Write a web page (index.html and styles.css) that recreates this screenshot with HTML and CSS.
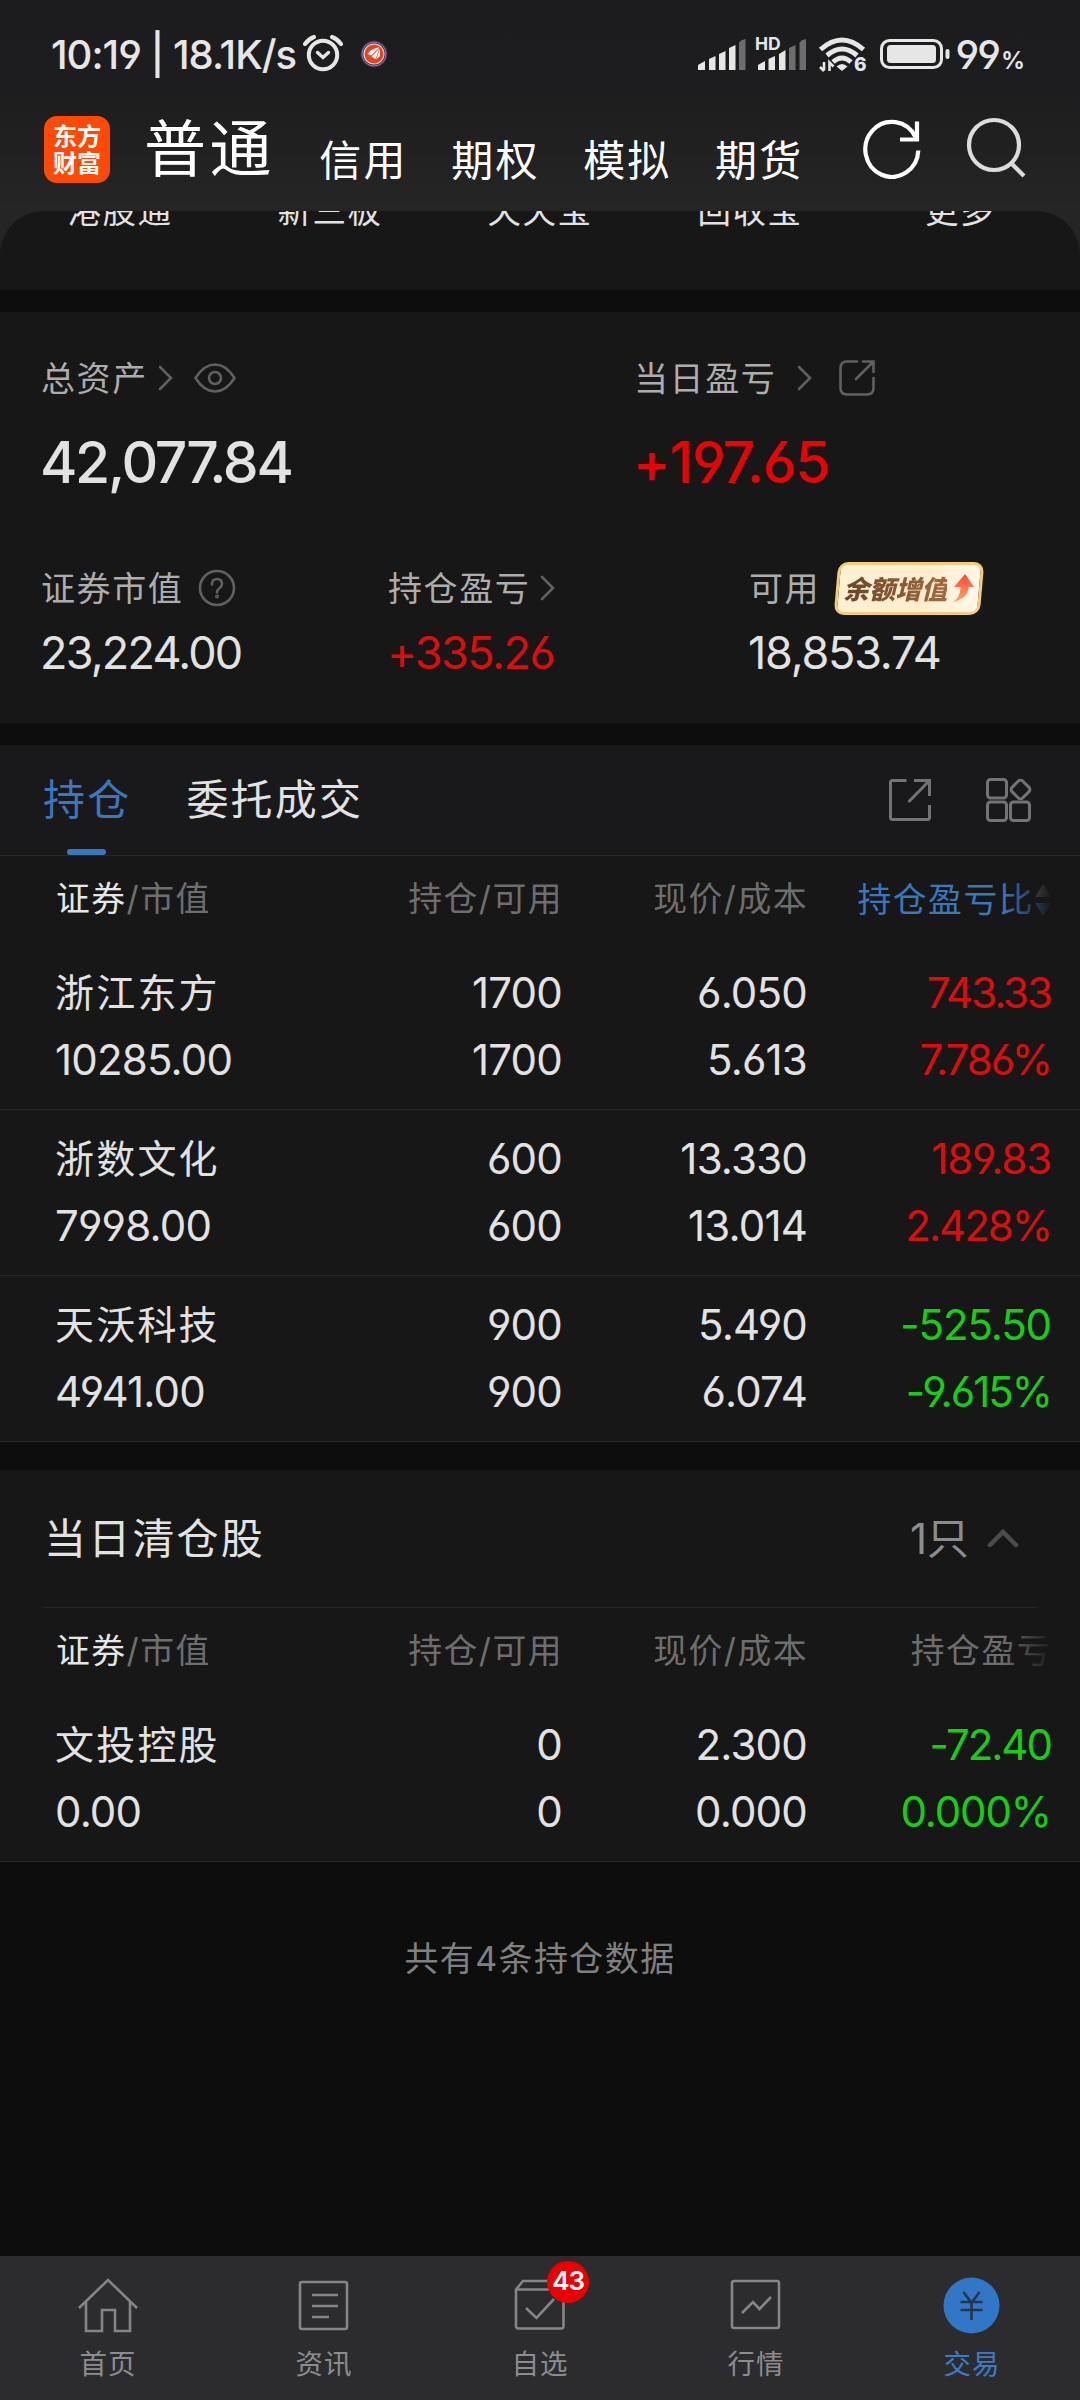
FILE: index.html
```
<!DOCTYPE html>
<html lang="zh-CN">
<head>
<meta charset="utf-8">
<title>交易</title>
<link rel="stylesheet" href="styles.css">
</head>
<body>
<div class="app">
  <header class="top">
    <div class="status">
      <span class="status-time">10:19 | 18.1K/s</span>
      <svg class="alarm" width="40" height="38" viewBox="0 0 40 38" fill="none" stroke="#e6e6e6" stroke-width="4">
        <circle cx="20" cy="20" r="14.2"/><path d="M14.5 17.5l5.5 5 5.5-5" stroke-width="3.4" stroke-linecap="round"/><path d="M2 9q3.500-5 9-7M38 9q-3.500-5-9-7" stroke-linecap="round"/>
      </svg>
      <svg class="notice" width="30" height="32" viewBox="0 0 30 32">
        <circle cx="15" cy="16" r="13.500" fill="#3d3159"/><circle cx="15" cy="16" r="12" fill="none" stroke="#8a80a8" stroke-width="1"/><circle cx="15" cy="16" r="10" fill="#e8431d" stroke="#f6d5cc" stroke-width="1.200"/><path d="M8.500 16q4-6 12-6.500L12 17.500zM12.500 18.500l8-8-4 10.500zM17 21.500l4-10.500v7z" fill="#fff"/>
      </svg>
      <div class="status-right">
        <svg width="172" height="38" viewBox="698 35 172 38" fill="#e6e6e6">
          <path d="M699 70v-5l7-4v9zM710 70V59l6.500-3v14zM720 70V54l6.500-3v19zM730 70V48l6.500-3v25z"/>
          <path fill="#6d6d6e" d="M740 70V43q1-3 6.500-4v31zM790 70V48l6.500-3v25zM800.500 70V43q1-3 6.500-4v31z"/>
          <path d="M759 70v-5l7-4v9zM769.500 70V59l6.500-3v14zM780 70V54l6.500-4v20z"/>
          <text x="756" y="50" class="hd">HD</text>
          <g fill="none" stroke="#e6e6e6" stroke-width="5"><path d="M821.500 49.500q21.500-19 43 0"/><path d="M828 55.500q15-13 30 0"/><path d="M834 62q9-8 18 0"/></g>
          <path d="M837.500 66.500q5.500-5 11 0l-5.500 4.500z"/>
          <path d="M825 62v8.500M821 67l4 4M830.500 71v-8.500l4 4" fill="none" stroke="#e6e6e6" stroke-width="2.600"/>
          <text x="855" y="71" class="six">6</text>
        </svg>
        <svg class="battery" width="70" height="32" viewBox="0 0 70 32"><rect x="1.500" y="2.500" width="60" height="27" rx="8" fill="none" stroke="#e6e6e6" stroke-width="3"/><rect x="7" y="7" width="49" height="18" rx="3.500" fill="#e6e6e6"/><rect x="65.500" y="11" width="4" height="10" rx="2" fill="#e6e6e6"/></svg>
        <span class="pct">99<small>%</small></span>
      </div>
    </div>
    <nav class="accounts">
      <div class="logo"><span>东方</span><span>财富</span></div>
      <span class="acct active">普通</span>
      <span class="acct">信用</span><span class="acct">期权</span><span class="acct">模拟</span><span class="acct">期货</span>
      <svg class="refresh" width="60" height="62" viewBox="0 0 60 62" fill="none" stroke="#fff" stroke-width="4.200"><path d="M56.300 33.500A26.500 27.500 0 1 1 53.500 20"/><path d="M55 4.500v18H38"/></svg>
      <svg class="search" width="60" height="62" viewBox="0 0 60 62" fill="none" stroke="#dcdcdc" stroke-width="4.200"><circle cx="28" cy="28" r="25"/><path d="M45.500 46.500L58 59"/></svg>
    </nav>
  </header>

  <section class="links-wrap"><div class="links"><span>港股通</span><span>新三板</span><span>天天宝</span><span>回收宝</span><span>更多</span></div></section>

  <section class="summary">
    <div class="sum-main">
      <div>
        <div class="label"><span>总资产</span>
          <svg class="chev" width="16" height="26" viewBox="0 0 16 26"><path d="M2 2l11 11L2 24"/></svg>
          <svg class="eye" width="42" height="32" viewBox="0 0 42 32"><path d="M1.500 16Q10 2.500 21 2.500T40.500 16Q32 29.500 21 29.500T1.500 16z"/><circle cx="21" cy="16" r="6"/></svg>
        </div>
        <div class="big">42,077.84</div>
      </div>
      <div>
        <div class="label"><span>当日盈亏</span>
          <svg class="chev far" width="16" height="26" viewBox="0 0 16 26"><path d="M2 2l11 11L2 24"/></svg>
          <svg class="share-sm" width="38" height="38" viewBox="0 0 38 38"><path d="M19 2.500H9Q2.500 2.500 2.500 9v20q0 6.500 6.500 6.500h20q6.500 0 6.500-6.500V19M25 2.500h10.500V13M35 3L18 20"/></svg>
        </div>
        <div class="big up day">+197.65</div>
      </div>
    </div>
    <div class="sum-sub">
      <div>
        <div class="label"><span>证券市值</span>
          <svg class="help" width="38" height="38" viewBox="0 0 38 38"><circle cx="19" cy="19" r="17"/><path d="M14 15.500q0-5.500 5-5.500t5 5q0 2.500-2.500 4.200T19 23.500"/><circle cx="19" cy="27.500" r=".7"/></svg>
        </div>
        <div class="mid v1">23,224.00</div>
      </div>
      <div>
        <div class="label"><span>持仓盈亏</span>
          <svg class="chev" width="16" height="26" viewBox="0 0 16 26"><path d="M2 2l11 11L2 24"/></svg>
        </div>
        <div class="mid up v2">+335.26</div>
      </div>
      <div>
        <div class="label"><span>可用</span>
          <div class="promo"><b>余额增值</b>
            <svg width="24" height="30" viewBox="0 0 24 30"><defs><linearGradient id="ar" x1="0" y1="0" x2="0" y2="1"><stop offset="0" stop-color="#fb4a35"/><stop offset="1" stop-color="#fba36c"/></linearGradient></defs><path d="M14 1l9 13h-5.500q0 11-15.500 15Q9.500 24 9.500 14H3z" fill="url(#ar)"/></svg>
          </div>
        </div>
        <div class="mid v3">18,853.74</div>
      </div>
    </div>
  </section>

  <section class="holdings">
    <div class="tabs">
      <span class="tab on">持仓</span><span class="tab">委托成交</span>
      <svg class="share-lg" width="44" height="44" viewBox="0 0 44 44"><path d="M18.500 2.500H4.500q-2 0-2 2v35q0 2 2 2h35q2 0 2-2V27M26 2.500h15.500V18M41 3L20.500 24"/></svg>
      <svg class="grid4" width="48" height="46" viewBox="0 0 48 46"><rect x="2.500" y="2.500" width="19" height="18.500" rx="3"/><rect x="2.500" y="25" width="19" height="18.500" rx="3"/><rect x="25.500" y="25" width="19" height="18.500" rx="3"/><rect x="28" y="5" width="15" height="15" rx="3" transform="rotate(45 35.500 12.500)"/></svg>
    </div>
    <div class="thead"><span><em>证券</em>/市值</span><span>持仓/可用</span><span>现价/成本</span><span class="sort">持仓盈亏比<svg width="18" height="34" viewBox="0 0 18 34"><path d="M9 1l8 13H1z" fill="#777"/><path d="M9 33l8-13H1z" fill="#3b77bc"/></svg></span></div>
    <div class="row"><span>浙江东方</span><span>1700</span><span>6.050</span><span class="up tight">743.33</span><span>10285.00</span><span>1700</span><span>5.613</span><span class="up tight">7.786%</span></div>
    <div class="row"><span>浙数文化</span><span>600</span><span>13.330</span><span class="up">189.83</span><span>7998.00</span><span>600</span><span>13.014</span><span class="up tight">2.428%</span></div>
    <div class="row"><span>天沃科技</span><span>900</span><span>5.490</span><span class="down">-525.50</span><span>4941.00</span><span>900</span><span>6.074</span><span class="down tight">-9.615%</span></div>
  </section>

  <section class="cleared">
    <div class="cleared-title"><h2>当日清仓股</h2><span>1只</span><svg width="32" height="20" viewBox="0 0 32 20"><path d="M3 17L16 4l13 13"/></svg></div>
    <div class="thead"><span><em>证券</em>/市值</span><span>持仓/可用</span><span>现价/成本</span><span>持仓盈亏</span></div>
    <div class="row"><span>文投控股</span><span>0</span><span>2.300</span><span class="down tight">-72.40</span><span>0.00</span><span>0</span><span>0.000</span><span class="down">0.000%</span></div>
  </section>

  <p class="total">共有4条持仓数据</p>

  <nav class="bottom">
    <div><svg width="62" height="58" viewBox="0 0 62 58"><path d="M2 32L31 4l29 28M9 26v29h16V34h13v21h15V26"/></svg>首页</div>
    <div><svg width="62" height="58" viewBox="0 0 62 58"><rect x="7" y="6" width="47" height="47" rx="2"/><path d="M19 19h26M19 30h26M19 41h17"/></svg>资讯</div>
    <div><svg width="62" height="58" viewBox="0 0 62 58"><path d="M7 13.500V50q0 2.500 2.500 2.500h43Q54.500 52.500 54.500 50V13.500L47 5H14zM7 13.500h47.500M17 32l10.500 10L45 23"/></svg>自选<i class="badge">43</i></div>
    <div><svg width="62" height="58" viewBox="0 0 62 58"><rect x="7" y="5" width="47" height="47" rx="2"/><path d="M17 37l11-11 6.500 7L46 21"/></svg>行情</div>
    <div class="on"><svg width="62" height="58" viewBox="0 0 62 58"><circle cx="30.500" cy="29.500" r="28" fill="#3177c5" stroke="none"/><path d="M22.500 16l8 11 8-11M30.500 27v17M19.500 26h22M19.500 34h22" stroke="#24364f"/></svg>交易</div>
  </nav>
</div>
</body>
</html>
```
FILE: styles.css
```
* { box-sizing: border-box; }
body {
  margin: 0;
  background: #0d0d0d;
  color: #e2e2e2;
  font-family: Inter, "Noto Sans CJK SC", sans-serif;
  font-feature-settings: "cv03", "cv04";
}
svg { flex: none; display: block; }
.app { width: 1080px; height: 2400px; display: flex; flex-direction: column; overflow: hidden; }

/* header */
.top { height: 211px; flex: none; background: linear-gradient(#1c1c1e 0, #1d1d1f 90px, #252525 211px); }
.status { height: 108px; display: flex; align-items: center; padding: 0 56px 0 51px; color: #e6e6e6; }
.status-time { font-size: 40px; font-weight: 500; letter-spacing: -1px; white-space: pre; width: 252px; }
.notice { margin-left: 16px; }
.status-right { margin-left: auto; display: flex; align-items: center; }
.battery { margin-left: 11px; }
.pct { margin-left: 5px; font-size: 40px; font-weight: 500; letter-spacing: -2px; white-space: nowrap; }
.pct small { font-size: 24px; font-weight: 600; margin-left: 2px; letter-spacing: -1px; }
.hd { font: 700 17.500px Inter, sans-serif; }
.six { font: 800 19px Inter, sans-serif; }
.accounts { display: flex; align-items: flex-start; height: 103px; padding-left: 44px; color: #fff; }
.logo { width: 66px; height: 67px; margin-top: 8px; border-radius: 13px; background: #ff4a05; display: flex; flex-direction: column; align-items: center; justify-content: center; font-size: 24px; font-weight: 700; line-height: 27px; flex: none; }
.acct { font-size: 42px; letter-spacing: 2.200px; line-height: 60px; margin: 23px 0 0 43.500px; white-space: nowrap; }
.acct.active { font-size: 62px; letter-spacing: 3.400px; line-height: 80px; margin: 2px 1px 0 34px; }
.refresh { margin: 9px 0 0 59px; }
.search { margin: 9px 0 0 44px; }

/* shortcuts, scrolled partly under the header */
.links-wrap {
  height: 79px; flex: none; overflow: hidden;
  background:
    radial-gradient(circle at 44px 44px, #171717 43.500px, #252525 44.500px) 0 0 / 44px 44px no-repeat,
    radial-gradient(circle at 0 44px, #171717 43.500px, #252525 44.500px) 100% 0 / 44px 44px no-repeat,
    #171717;
}
.links { display: flex; padding: 0 15px; margin-top: -25px; }
.links span { width: 210px; text-align: center; font-size: 33.500px; letter-spacing: 1.500px; line-height: 50px; }

/* assets */
.summary { height: 411px; flex: none; margin-top: 22px; background: #171717; padding: 41px 41px 0; }
.label { display: flex; align-items: center; height: 50px; font-size: 34px; letter-spacing: 1.600px; color: #adadad; white-space: nowrap; }
.label > span { margin-top: -4px; }
.label svg { fill: none; stroke: #606060; stroke-width: 2.600; stroke-linecap: round; }
.chev { margin-left: 10px; }
.chev.far { margin-left: 21px; }
.eye { margin-left: 20px; }
.share-sm { margin-left: 25px; }
.help { margin-left: 15px; }
.sum-main { display: grid; grid-template-columns: 593px 1fr; height: 210px; }
.sum-sub { display: grid; grid-template-columns: 347px 361px 1fr; }
.big { font-size: 57px; font-weight: 500; line-height: 70px; margin: 25px 0 0 -1px; letter-spacing: -2.300px; }
.big.day { letter-spacing: -1.200px; }
.mid { font-size: 45px; line-height: 54px; margin: 13px 0 0 -1px; letter-spacing: -1.800px; }
.mid.v2 { letter-spacing: -1.500px; }
.mid.v3 { letter-spacing: -1.200px; }
.up { color: #de0c0a; }
.big.up { color: #e60404; }
.down { color: #14cf14; }
.promo { position: relative; z-index: 0; margin-left: 13px; width: 152px; height: 53px; display: flex; align-items: center; justify-content: center; gap: 4px; letter-spacing: 0; }
.promo::before { content: ""; position: absolute; z-index: -1; inset: 0 3px; border: 3px solid #f2cd7d; border-radius: 10px; background: linear-gradient(100deg, #fff0d4, #fdedcf 60%, #fff7e8); transform: skewX(-5deg); }
.promo b { font-size: 26px; font-weight: 900; font-style: italic; background: linear-gradient(90deg, #68452c, #a26a3d); -webkit-background-clip: text; background-clip: text; color: transparent; margin-top: -2px; }
.promo svg { stroke: none; }

/* holdings */
.holdings { flex: none; margin-top: 22px; background: #171717; }
.tabs { height: 111px; display: flex; align-items: center; padding: 0 47px 0 43px; background: #19191b; border-bottom: 1px solid #282828; }
.tab { position: relative; top: -4px; font-size: 42px; letter-spacing: 2.200px; margin-right: 55px; }
.tab.on { color: #3b77bc; }
.tab.on::after { content: ""; position: absolute; left: 24px; bottom: -28px; width: 39px; height: 6px; border-radius: 3px; background: #3b77bc; }
.tabs svg { fill: none; stroke: #737375; stroke-width: 3; }
.share-lg { margin-left: auto; }
.grid4 { margin-left: 53px; }
.thead, .row { display: grid; grid-template-columns: 264px 243px 245px 244px; padding-left: 55px; }
.thead > span:not(:nth-child(4n+1)), .row > span:not(:nth-child(4n+1)) { text-align: right; white-space: nowrap; }
.thead { position: relative; height: 88px; line-height: 86px; font-size: 33.800px; letter-spacing: 1.500px; color: #6e6e6e; padding-left: 56px; }
.thead em { font-style: normal; color: #e6e6e6; }
.thead::after { content: ""; position: absolute; top: 0; right: 0; width: 77px; height: 87px; background: linear-gradient(90deg, #17171700, #171717e6 45px, #171717); }
.thead .sort { display: flex; align-items: center; justify-content: flex-end; color: #3b77bc; }
.row { height: 166px; padding-top: 15px; grid-auto-rows: 67px; line-height: 67px; font-size: 42px; letter-spacing: -.800px; border-bottom: 1px solid #282828; }
.row > span:first-child { font-size: 39px; letter-spacing: 2.200px; }
.row > span:nth-child(4n) { letter-spacing: -1.100px; }
.row > .tight.tight.tight { letter-spacing: -2px; }

/* cleared */
.cleared { flex: none; margin-top: 28px; background: #171717; }
.cleared-title { display: flex; align-items: center; height: 138px; margin: 0 44px; padding: 0 17px 6px 0; border-bottom: 1px solid #282828; }
.cleared-title h2 { margin: 0 auto 0 0; font-size: 42px; font-weight: 400; letter-spacing: 2.200px; }
.cleared-title span { font-size: 42px; color: #8c8c91; margin-right: 18px; }
.cleared-title svg { margin-top: 5px; fill: none; stroke: #4c4c4c; stroke-width: 4.500; stroke-linecap: round; }

.total { margin: 72px 0 0; text-align: center; font-size: 34px; line-height: 50px; letter-spacing: 1.400px; color: #808080; }

/* bottom bar */
.bottom { margin-top: auto; height: 144px; flex: none; display: grid; grid-template-columns: repeat(5, 1fr); background: #2c2c2e; }
.bottom div { position: relative; display: flex; flex-direction: column; align-items: center; padding-top: 20px; font-size: 27.500px; letter-spacing: 1px; line-height: 40px; gap: 10px; color: #8c8c8e; }
.bottom svg { fill: none; stroke: #858587; stroke-width: 2.600; }
.bottom .on { color: #3d7bc3; }
.badge { position: absolute; left: 115px; top: 5px; width: 42px; height: 42px; border-radius: 50%; background: #ea0000; color: #fff; font: 600 26px/40px Inter, sans-serif; letter-spacing: -1.200px; text-align: center; }
```
